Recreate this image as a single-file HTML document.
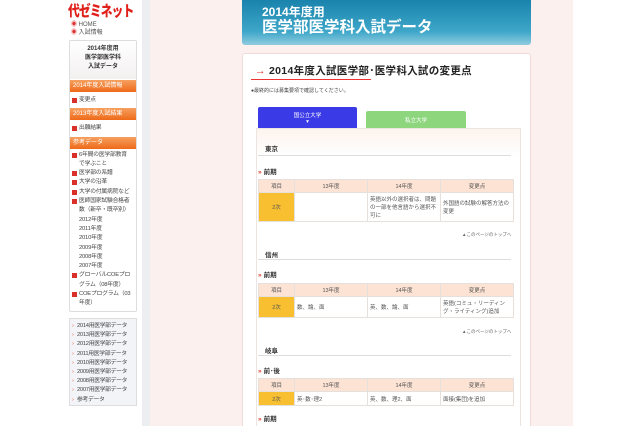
<!DOCTYPE html>
<html><head><meta charset="utf-8"><style>
*{margin:0;padding:0;box-sizing:border-box}
html,body{width:640px;height:426px;overflow:hidden}
body{background:#fff;font-family:"Liberation Sans","Noto Sans CJK JP",sans-serif;color:#333;position:relative}
.abs{position:absolute}
#left{left:60px;top:0;width:82px;height:426px;background:#fff}
#sb{left:142px;top:0;width:8px;height:426px;background:#eceef2}
#pink{left:150px;top:0;width:423px;height:426px;background:#fcf0ee}
.logo{left:68px;top:0px;font-size:15px;font-weight:900;color:#e0201a;letter-spacing:-1px;transform:scaleX(0.78);transform-origin:0 0;white-space:nowrap}
.small{font-size:6px;line-height:7.5px;color:#555}
.side{left:69px;top:40px;width:68px;height:272px;border:1px solid #ddd;border-radius:2px;background:#fff;overflow:hidden}
.side .t{text-align:center;font-size:6px;line-height:9px;font-weight:bold;color:#333;padding-top:4px;height:38px;background:linear-gradient(#fff,#f3f0f0)}
.bar{background:linear-gradient(#f6a060,#ee6a18);color:#fff;font-size:6px;height:12px;line-height:12px;padding-left:3px;margin:1px 0;white-space:nowrap}
.it{font-size:5.8px;line-height:9.3px;color:#444;padding-left:9px;position:relative;letter-spacing:-0.2px}
.it.s{padding-top:2.5px;padding-bottom:2.5px}
.it.b:before{content:"";position:absolute;left:2px;top:2px;width:5px;height:5px;background:#d9302a}
.it.s:before{top:4.5px}
.side2{left:69px;top:318px;width:68px;height:88px;border:1px solid #ddd;background:#f3f4f8;padding-top:3px;overflow:hidden}
.side2 div{font-size:5.8px;line-height:9.2px;color:#444;padding-left:7px;position:relative;white-space:nowrap;letter-spacing:-0.3px}
.side2 div:before{content:"›";position:absolute;left:2px;color:#e06030}
#hdr{left:242px;top:0;width:289px;height:45px;background:linear-gradient(#1a83ad,#3ea6c8 70%,#8fcce0);border-radius:0 0 3px 3px;color:#fff;font-weight:bold;padding-left:20px}
#main{left:242px;top:53px;width:289px;height:380px;background:#fff;border:1px solid #eedcd8;border-radius:3px}
h1{position:absolute;left:255px;top:63px;font-size:10.5px;font-weight:bold;color:#222;letter-spacing:.3px;white-space:nowrap}
.ul{left:251px;top:79px;width:120px;height:1px;background:#e33}
.tab1{left:258px;top:107px;width:99px;height:21px;background:#3a3ae6;color:#fff;font-size:5.5px;text-align:center;padding-top:4px;border-radius:2px 2px 0 0}
.tab2{left:366px;top:111px;width:100px;height:17px;background:#8ed67e;color:#fff;font-size:5.5px;text-align:center;padding-top:5px;border-radius:2px 2px 0 0}
#box{left:256px;top:128px;width:265px;height:300px;border:1px solid #ece4e0;background:#fff}
.boxtop{left:257px;top:129px;width:263px;height:28px;background:linear-gradient(#fdf3ee,#fff)}
.pref{font-size:6.5px;font-weight:bold;color:#333}
.hr{height:1px;background:#ddd;width:253px;left:258px}
.sub{font-size:6.5px;font-weight:bold;color:#333}
.sub b{color:#d8402a;margin-right:2px}
table{position:absolute;left:258px;border-collapse:collapse;font-size:5.5px;color:#555}
td{border:1px solid #e6e0dc;padding:1px 2px;vertical-align:middle}
tr.h td{background:#fde3d4;text-align:center;height:13px}
td.y{background:#f8c030;text-align:center}
.top{font-size:4.5px;color:#666;left:462px}
</style></head><body>
<div class="abs" id="left"></div><div class="abs" id="sb"></div><div class="abs" id="pink"></div>
<div class="abs logo">代ゼミネット</div>
<div class="abs small" style="left:71px;top:22px"><span style="color:#d33">◉</span> HOME<br><span style="color:#d33">◉</span> 入試情報</div>
<div class="abs side">
<div class="t">2014年度用<br>医学部医学科<br>入試データ</div>
<div class="bar">2014年度入試情報</div>
<div class="it b s">変更点</div>
<div class="bar">2013年度入試結果</div>
<div class="it b s">出願結果</div>
<div class="bar">参考データ</div>
<div class="it b" style="margin-top:2px">6年間の医学部教育<br>で学ぶこと</div>
<div class="it b">医学部の系譜</div>
<div class="it b">大学の沿革</div>
<div class="it b">大学の付属病院など</div>
<div class="it b">医師国家試験合格者<br>数（新卒・既卒別）</div>
<div class="it">2012年度</div><div class="it">2011年度</div><div class="it">2010年度</div><div class="it">2009年度</div><div class="it">2008年度</div><div class="it">2007年度</div>
<div class="it b">グローバルCOEプロ<br>グラム（08年度）</div>
<div class="it b">COEプログラム（03<br>年度）</div>
</div>
<div class="abs side2">
<div>2014用医学部データ</div><div>2013用医学部データ</div><div>2012用医学部データ</div><div>2011用医学部データ</div><div>2010用医学部データ</div><div>2009用医学部データ</div><div>2008用医学部データ</div><div>2007用医学部データ</div><div>参考データ</div>
</div>
<div class="abs" id="hdr"><div style="font-size:12px;margin-top:5px;line-height:14px">2014年度用</div><div style="font-size:15.5px;line-height:18px">医学部医学科入試データ</div></div>
<div class="abs" id="main"></div>
<h1><span style="color:#e33">→</span> 2014年度入試医学部･医学科入試の変更点</h1>
<div class="abs ul"></div>
<div class="abs" style="left:251px;top:87px;font-size:5px;color:#444">●最終的には募集要項で確認してください。</div>
<div class="abs tab1">国公立大学<br>▾</div>
<div class="abs tab2">私立大学</div>
<div class="abs" id="box"></div>
<div class="abs boxtop"></div>
<div class="abs pref" style="left:265px;top:143px">東京</div>
<div class="abs hr" style="top:155px"></div>
<div class="abs sub" style="left:258px;top:166px"><b>»</b>前期</div>
<table style="top:179px;width:256px"><tr class="h"><td style="width:36px">項目</td><td style="width:73px">13年度</td><td style="width:73px">14年度</td><td>変更点</td></tr>
<tr style="height:29px"><td class="y">2次</td><td></td><td>英語以外の選択者は、問題の一部を他言語から選択不可に</td><td>外国語の試験の解答方法の変更</td></tr></table>
<div class="abs top" style="top:232px">▲このページのトップへ</div>
<div class="abs pref" style="left:265px;top:249px">信州</div>
<div class="abs hr" style="top:259px"></div>
<div class="abs sub" style="left:258px;top:269px"><b>»</b>前期</div>
<table style="top:283px;width:256px"><tr class="h"><td style="width:36px">項目</td><td style="width:73px">13年度</td><td style="width:73px">14年度</td><td>変更点</td></tr>
<tr style="height:21px"><td class="y">2次</td><td>数、論、面</td><td>英、数、論、面</td><td>英語(コミュ・リーディング・ライティング)追加</td></tr></table>
<div class="abs top" style="top:329px">▲このページのトップへ</div>
<div class="abs pref" style="left:265px;top:345px">岐阜</div>
<div class="abs hr" style="top:355px"></div>
<div class="abs sub" style="left:258px;top:365px"><b>»</b>前･後</div>
<table style="top:378px;width:256px"><tr class="h"><td style="width:36px">項目</td><td style="width:73px">13年度</td><td style="width:73px">14年度</td><td>変更点</td></tr>
<tr style="height:14px"><td class="y">2次</td><td>英･数･理2</td><td>英、数、理2、面</td><td>面接(集団)を追加</td></tr></table>
<div class="abs sub" style="left:258px;top:413px"><b>»</b>前期</div>
</body></html>
